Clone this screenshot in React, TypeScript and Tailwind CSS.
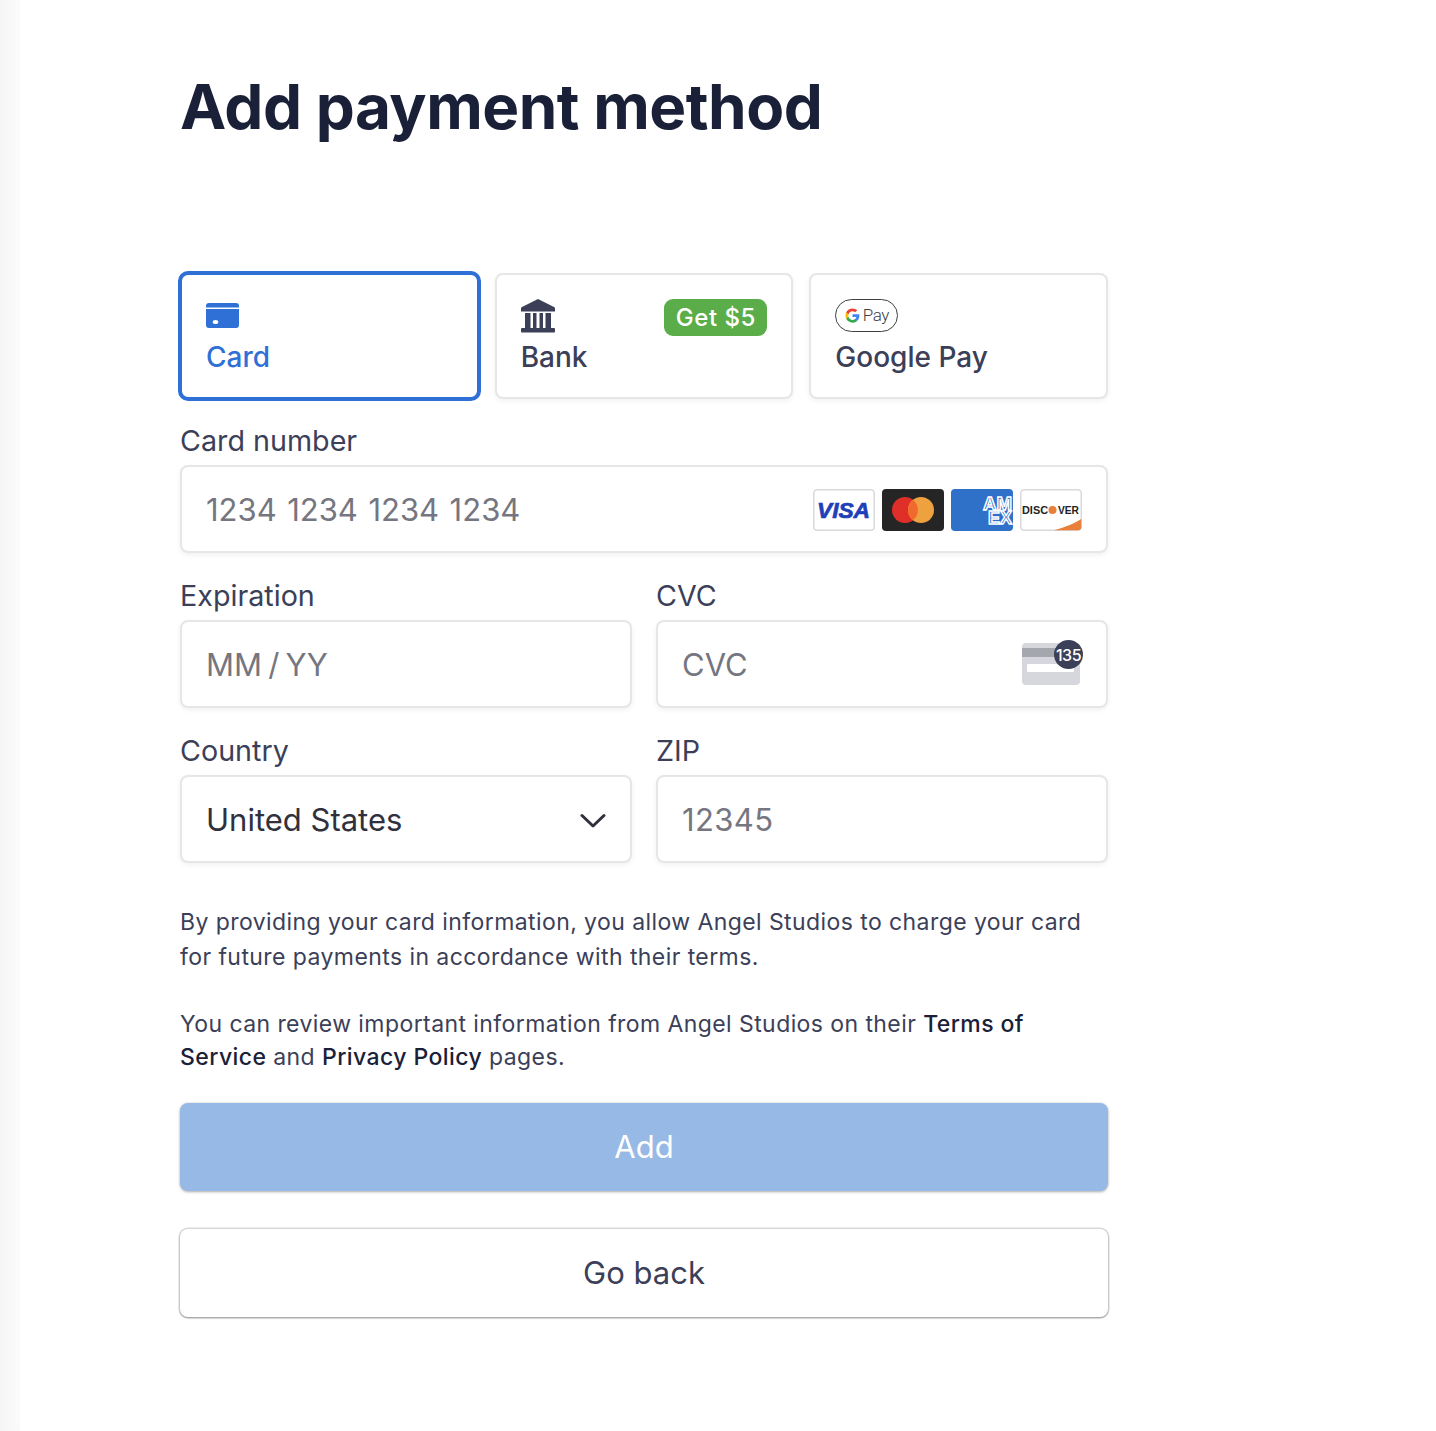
const inputBox =
  "h-[88px] rounded-[8px] border-2 border-[#e6e6e6] bg-white shadow-[0_2px_5px_rgba(0,0,0,0.06)] flex items-center px-[24px] pt-[3px] text-[31px]";

function CardIcon() {
  return (
    <svg width="33" height="25" viewBox="0 0 33 25" className="block">
      <path d="M0 3a3 3 0 0 1 3-3h27a3 3 0 0 1 3 3v1.500H0z" fill="#2f70d6" />
      <path
        fillRule="evenodd"
        d="M0 6h33v16a3 3 0 0 1-3 3H3a3 3 0 0 1-3-3z M6.700 19a2.800 2 0 1 0 5.600 0a2.800 2 0 1 0-5.600 0z"
        fill="#2f70d6"
      />
    </svg>
  );
}

function BankIcon() {
  return (
    <svg width="34" height="34" viewBox="0 0 34 34" className="block">
      <path d="M17 0 33 8a1.500 1.500 0 0 1 1 1.500V12.500H0V9.500A1.500 1.500 0 0 1 1 8z" fill="#3b4058" />
      <rect x="4" y="14" width="5.500" height="15" fill="#3b4058" />
      <rect x="12" y="14" width="3.500" height="15" fill="#3b4058" />
      <rect x="18.500" y="14" width="3.500" height="15" fill="#3b4058" />
      <rect x="24.500" y="14" width="5.500" height="15" fill="#3b4058" />
      <rect x="0" y="29" width="34" height="4.500" rx="1" fill="#3b4058" />
    </svg>
  );
}

function GPayIcon() {
  return (
    <div className="w-[63px] h-[33px] rounded-full border border-[#3c4043] flex items-center justify-center gap-[3px] bg-white">
      <svg width="15" height="15" viewBox="0 0 48 48" className="block">
        <path fill="#4285F4" d="M46 24.500c0-1.600-.1-3.100-.4-4.500H24v8.600h12.400c-.5 2.800-2.100 5.200-4.500 6.800v5.600h7.200C43.400 37 46 31.300 46 24.500z" />
        <path fill="#34A853" d="M24 47c6.100 0 11.200-2 14.900-5.500l-7.200-5.600c-2 1.400-4.600 2.200-7.700 2.200-5.900 0-10.900-4-12.700-9.400H3.800v5.800C7.500 41.800 15.200 47 24 47z" />
        <path fill="#FBBC05" d="M11.300 28.700c-.5-1.400-.7-2.900-.7-4.500s.3-3.100.7-4.500v-5.800H3.800C2.300 16.900 1.400 20.400 1.400 24.200s.9 7.300 2.400 10.300z" />
        <path fill="#EA4335" d="M24 10.300c3.300 0 6.300 1.100 8.600 3.400l6.400-6.400C35.200 3.700 30.100 1.400 24 1.400 15.200 1.400 7.500 6.500 3.800 13.900l7.500 5.800c1.800-5.400 6.800-9.400 12.700-9.400z" />
      </svg>
      <span className="text-[17px] text-[#3c4043] tracking-[-0.5px] font-['Roboto',sans-serif] font-light leading-none">Pay</span>
    </div>
  );
}

function Logos() {
  return (
    <div className="flex gap-[7px] -mt-[1px]">
      <svg width="62" height="42" viewBox="0 0 62 42" className="block">
        <rect x="0.750" y="0.750" width="60.500" height="40.500" rx="3.500" fill="#fff" stroke="#d9d9d9" strokeWidth="1.500" />
        <text x="4" y="29" fontFamily="'Liberation Sans',sans-serif" fontWeight="700" fontStyle="italic" fontSize="22" fill="#1f3fb8" stroke="#1f3fb8" strokeWidth="0.700" textLength="53" lengthAdjust="spacingAndGlyphs">VISA</text>
      </svg>
      <svg width="62" height="42" viewBox="0 0 62 42" className="block">
        <rect width="62" height="42" rx="4" fill="#252525" />
        <circle cx="23" cy="21" r="13" fill="#e02f29" />
        <circle cx="39" cy="21" r="13" fill="#eda13f" />
        <path d="M31 10.800a13 13 0 0 1 0 20.400a13 13 0 0 1 0-20.400z" fill="#f16a2d" />
      </svg>
      <svg width="62" height="42" viewBox="0 0 62 42" className="block">
        <rect width="62" height="42" rx="4" fill="#2f70c9" />
        <text x="32" y="21" fontFamily="'Liberation Sans',sans-serif" fontWeight="700" fontSize="18" fill="#2f70c9" stroke="#fff" strokeWidth="1.400" textLength="29" lengthAdjust="spacingAndGlyphs">AM</text>
        <text x="37" y="35" fontFamily="'Liberation Sans',sans-serif" fontWeight="700" fontSize="18" fill="#2f70c9" stroke="#fff" strokeWidth="1.400" textLength="24" lengthAdjust="spacingAndGlyphs">EX</text>
      </svg>
      <svg width="62" height="42" viewBox="0 0 62 42" className="block">
        <rect x="0.750" y="0.750" width="60.500" height="40.500" rx="3.500" fill="#fff" stroke="#d9d9d9" strokeWidth="1.500" />
        <path d="M34 41.250C46 38 55 34 61.250 30V38a3.250 3.250 0 0 1-3.250 3.250z" fill="#e8803a" />
        <text x="2" y="25" fontFamily="'Liberation Sans',sans-serif" fontWeight="700" fontSize="11.500" fill="#222" textLength="26" lengthAdjust="spacingAndGlyphs">DISC</text>
        <circle cx="32.500" cy="21" r="4" fill="#e8803a" />
        <text x="38" y="25" fontFamily="'Liberation Sans',sans-serif" fontWeight="700" fontSize="11.500" fill="#222" textLength="21" lengthAdjust="spacingAndGlyphs">VER</text>
      </svg>
    </div>
  );
}

function CvcIcon() {
  return (
    <div className="relative w-[60px] h-[45px] mb-[6px]">
      <svg width="58" height="42" viewBox="0 0 58 42" className="absolute left-0 bottom-0 block">
        <rect width="58" height="42" rx="4" fill="#d5d7dc" />
        <rect y="5" width="58" height="9" fill="#a5a7ae" />
        <rect x="5" y="21" width="47" height="8" rx="1" fill="#fff" />
      </svg>
      <div className="absolute -right-[1px] top-0 w-[29px] h-[29px] rounded-full bg-[#3b4058] text-white text-[16px] font-medium flex items-center justify-center tracking-[-0.5px]">
        135
      </div>
    </div>
  );
}

export default function App() {
  return (
    <div className="flex min-h-[1431px] bg-white font-['Inter',sans-serif] text-[#3b4058]">
      <div className="w-5 shrink-0 bg-gradient-to-r from-[#f5f5f5] to-[#fbfbfb]" />
      <main className="ml-[160px] w-[928px]">
        <h1 className="mt-[71px] text-[62px] leading-[72px] font-bold tracking-[-0.5px] text-[#1a2038] whitespace-nowrap">
          Add payment method
        </h1>

        <div className="mt-[130px] grid grid-cols-3 gap-[16px]">
          <div className="relative h-[126px] rounded-[8px] bg-white outline-[4px] outline-[#2f70d6] -outline-offset-2 pl-[26px] pt-[30px] text-[#2f70d6]">
            <CardIcon />
            <div className="mt-[11px] text-[28px] leading-[36px] font-medium">Card</div>
          </div>
          <div className="relative h-[126px] rounded-[8px] border-2 border-[#e6e6e6] bg-white shadow-[0_2px_5px_rgba(0,0,0,0.06)] pl-[24px] pt-[24px]">
            <BankIcon />
            <div className="mt-[6px] text-[28px] leading-[36px] font-medium">Bank</div>
            <span className="absolute right-[24px] top-[24px] h-[37px] w-[103px] rounded-[9px] bg-[#5aad48] text-white text-[24px] font-medium tracking-[0.5px] flex items-center justify-center">
              Get $5
            </span>
          </div>
          <div className="h-[126px] rounded-[8px] border-2 border-[#e6e6e6] bg-white shadow-[0_2px_5px_rgba(0,0,0,0.06)] pl-[24px] pt-[24px]">
            <GPayIcon />
            <div className="mt-[7px] text-[28px] leading-[36px] font-medium">Google Pay</div>
          </div>
        </div>

        <label className="block mt-[24px] text-[28.700px] leading-[36px]">Card number</label>
        <div className={`mt-[6px] justify-between ${inputBox}`}>
          <span className="text-[#757680] [word-spacing:1.800px]">1234 1234 1234 1234</span>
          <Logos />
        </div>

        <div className="mt-[25px] grid grid-cols-2 gap-x-[24px] gap-y-[25px]">
          <div>
            <label className="block text-[28.700px] leading-[36px]">Expiration</label>
            <div className={`mt-[6px] text-[#757680] [word-spacing:-2.500px] ${inputBox}`}>MM / YY</div>
          </div>
          <div>
            <label className="block text-[28.700px] leading-[36px]">CVC</label>
            <div className={`mt-[6px] justify-between text-[#757680] ${inputBox}`}>
              CVC
              <CvcIcon />
            </div>
          </div>
          <div>
            <label className="block text-[28.700px] leading-[36px]">Country</label>
            <div className={`mt-[6px] justify-between text-[#30313d] ${inputBox}`}>
              United States
              <svg width="26" height="16" viewBox="0 0 26 16" fill="none" className="block shrink-0">
                <path d="M2 2.500 13 13 24 2.500" stroke="#30313d" strokeWidth="3" strokeLinecap="round" strokeLinejoin="round" />
              </svg>
            </div>
          </div>
          <div>
            <label className="block text-[28.700px] leading-[36px]">ZIP</label>
            <div className={`mt-[6px] text-[#757680] tracking-[0.4px] ${inputBox}`}>12345</div>
          </div>
        </div>

        <p className="mt-[42px] text-[23px] leading-[35px] tracking-[0.42px] whitespace-nowrap">
          By providing your card information, you allow Angel Studios to charge your card
          <br />
          for future payments in accordance with their terms.
        </p>
        <p className="mt-[33px] text-[23px] leading-[33px] tracking-[0.42px] whitespace-nowrap">
          You can review important information from Angel Studios on their{" "}
          <span className="font-medium text-[#1a2038]">Terms of</span>
          <br />
          <span className="font-medium text-[#1a2038]">Service</span> and{" "}
          <span className="font-medium text-[#1a2038]">Privacy Policy</span> pages.
        </p>

        <button className="mt-[29px] block w-full h-[88px] rounded-[8px] bg-[#97b9e6] text-white text-[31px] shadow-[0_1px_3px_rgba(0,0,0,0.3),0_0_0_1px_rgba(0,0,0,0.03)]">
          Add
        </button>
        <button className="mt-[38px] block w-full h-[88px] rounded-[8px] bg-white text-[31px] text-[#3b4058] shadow-[0_1px_2px_rgba(0,0,0,0.3),0_0_0_1.500px_rgba(0,0,0,0.14)]">
          Go back
        </button>
      </main>
    </div>
  );
}
